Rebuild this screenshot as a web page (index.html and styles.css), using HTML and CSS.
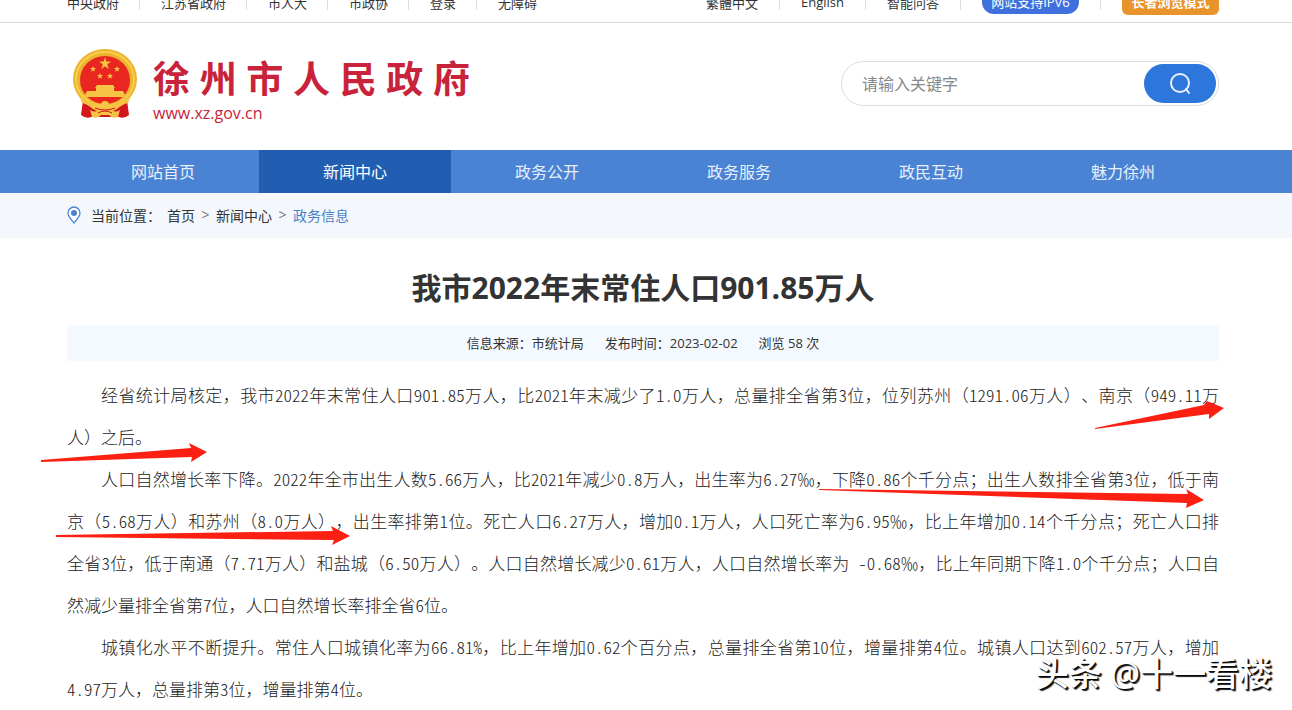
FILE: index.html
```html
<!DOCTYPE html>
<html lang="zh-CN">
<head>
    <meta charset="UTF-8">
    <meta name="viewport" content="width=device-width, initial-scale=1.0">
    <title>我市2022年末常住人口901.85万人</title>
    <link rel="stylesheet" href="styles.css">
</head>
<body>

    <div class="topbar">
        <div class="wrap topbar-inner">
            <div class="top-links top-left">
                <a href="#">中央政府</a>
                <a href="#">江苏省政府</a>
                <a href="#">市人大</a>
                <a href="#">市政协</a>
                <a href="#">登录</a>
                <a href="#">无障碍</a>
            </div>
            <div class="top-links">
                <a href="#">繁體中文</a>
                <a href="#">English</a>
                <a href="#">智能问答</a>
                <a href="#"><span class="pill">网站支持IPV6</span></a>
                <a href="#"><span class="pill pill-orange">长者浏览模式</span></a>
            </div>
        </div>
    </div>

    <header class="wrap header">
        <a class="logo" href="#">
            <svg class="emblem" viewBox="0 0 64 70" aria-hidden="true">
                <path d="M11 44 L8 66 Q13 70 18 68 L46 68 Q51 70 56 66 L53 44 Z" fill="#d3161b"/>
                <ellipse cx="32" cy="30" rx="32" ry="30" fill="#edb32f"/>
                <ellipse cx="32" cy="30" rx="29" ry="27" fill="none" stroke="#f8cf4c" stroke-width="2"/>
                <ellipse cx="32" cy="31" rx="25" ry="24" fill="#e92720"/>
                <g fill="#f6c444">
                    <path d="M32 8 L33.400 12.500 L38 12.500 L34.300 15.300 L35.700 20 L32 17.200 L28.300 20 L29.700 15.300 L26 12.500 L30.600 12.500 Z"/>
                    <path d="M20 17 l.8 2 2.200 0 -1.700 1.500 .7 2.300 -2-1.400 -2 1.400 .7-2.300 -1.700-1.500 2.200 0z"/>
                    <path d="M44 17 l.8 2 2.200 0 -1.700 1.500 .7 2.300 -2-1.400 -2 1.400 .7-2.300 -1.700-1.500 2.200 0z"/>
                    <path d="M27 24 l.8 2 2.200 0 -1.700 1.500 .7 2.300 -2-1.400 -2 1.400 .7-2.300 -1.700-1.500 2.200 0z"/>
                    <path d="M37 24 l.8 2 2.200 0 -1.700 1.500 .7 2.300 -2-1.400 -2 1.400 .7-2.300 -1.700-1.500 2.200 0z"/>
                    <path d="M24 36 H40 L42 39 H41 V42 H50 L52 46 V48 H12 V46 L14 42 H23 V39 H22 Z"/>
                    <path d="M6 46 L14 53 Q22 51 26 57 H38 Q42 51 50 53 L58 46 L55 54 Q50 55 44 60 L38 63 H26 L20 60 Q14 55 9 54 Z"/>
                    <path d="M17 61 Q22 64 25 61 Q32 57 39 61 Q42 64 47 61 L45 68 Q39 70 36 66 H28 Q25 70 19 68 Z"/>
                    <circle cx="32" cy="56" r="4"/>
                </g>
                <path d="M22 59 Q32 63 42 59 M25 64 Q32 60 39 64" fill="none" stroke="#d3161b" stroke-width="1"/>
            </svg>
            <span class="logo-text">
                <span class="logo-name">徐州市人民政府</span>
                <span class="logo-url">www.xz.gov.cn</span>
            </span>
        </a>
        <form class="search">
            <input type="text" placeholder="请输入关键字" aria-label="请输入关键字">
            <button type="button" aria-label="搜索">
                <svg width="24" height="24" viewBox="0 0 24 24" fill="none" stroke="#e8f1fd" stroke-width="2" stroke-linecap="round">
                    <circle cx="12" cy="11" r="9"/>
                    <path d="M18 17 L21 21"/>
                </svg>
            </button>
        </form>
    </header>

    <nav class="nav">
        <div class="wrap nav-inner">
            <a href="#">网站首页</a>
            <a href="#" class="active">新闻中心</a>
            <a href="#">政务公开</a>
            <a href="#">政务服务</a>
            <a href="#">政民互动</a>
            <a href="#">魅力徐州</a>
        </div>
    </nav>

    <div class="crumbs">
        <div class="wrap crumbs-inner">
            <svg class="pin" width="14" height="18" viewBox="0 0 14 18">
                <path d="M7 1 A6 6 0 0 1 13 7 C13 11 9 14 7 17 C5 14 1 11 1 7 A6 6 0 0 1 7 1 Z" fill="#fff" stroke="#4a83d3" stroke-width="1.300"/>
                <circle cx="7" cy="7" r="3" fill="#4a83d3"/>
            </svg>
            <span class="crumbs-label">当前位置：</span>
            <a href="#">首页</a>
            <i>&gt;</i>
            <a href="#">新闻中心</a>
            <i>&gt;</i>
            <a href="#" class="current">政务信息</a>
        </div>
    </div>

    <main class="wrap">
        <h1 class="title">我市2022年末常住人口901.85万人</h1>
        <div class="meta">
            <span>信息来源：市统计局</span>
            <span>发布时间：2023-02-02</span>
            <span>浏览 58 次</span>
        </div>
        <article class="content">
            <p>经省统计局核定，我市<b>2022</b>年末常住人口<b>901.85</b>万人，比<b>2021</b>年末减少了<b>1.0</b>万人，总量排全省第<b>3</b>位，位列苏州（<b>1291.06</b>万人）、南京（<b>949.11</b>万人）之后。</p>
            <p>人口自然增长率下降。<b>2022</b>年全市出生人数<b>5.66</b>万人，比<b>2021</b>年减少<b>0.8</b>万人，出生率为<b>6.27</b>‰，下降<b>0.86</b>个千分点；出生人数排全省第<b>3</b>位，低于南京（<b>5.68</b>万人）和苏州（<b>8.0</b>万人），出生率排第<b>1</b>位。死亡人口<b>6.27</b>万人，增加<b>0.1</b>万人，人口死亡率为<b>6.95</b>‰，比上年增加<b>0.14</b>个千分点；死亡人口排<span class="nowrap">全省</span><b>3</b>位，低于南通（<b>7.71</b>万人）和盐城（<b>6.50</b>万人）。人口自然增长减少<b>0.61</b>万人，人口自然增长率为<b> -0.68</b>‰，比上年同期下降<b>1.0</b>个千分点；人口自然减少量排全省第<b>7</b>位，人口自然增长率排全省<b>6</b>位。</p>
            <p>城镇化水平不断提升。常住人口城镇化率为<b>66.81%</b>，比上年增加<b>0.62</b>个百分点，总量排全省第<b>10</b>位，增量排第<b>4</b>位。城镇人口达到<b>602.57</b>万人，增加<b>4.97</b>万人，总量排第<b>3</b>位，增量排第<b>4</b>位。</p>
        </article>
    </main>

    <!-- 重点标注箭头 -->
    <svg class="arrows" viewBox="0 0 1292 710" fill="#fb2011" aria-hidden="true">
        <path d="M1095 428 L1204 405 L1207 401 L1224 408 L1209 419 L1209 414 L1095 429 Z"/>
        <path d="M41 460 L191 448 L189 443 L207 452 L191 462 L192 457 L41 462 Z"/>
        <path d="M819 489 L1188 494 L1186 489 L1204 500 L1186 508 L1187 503 L819 490 Z"/>
        <path d="M56 535 L333 531 L331 526 L350 536 L332 545 L334 540 L56 537 Z"/>
    </svg>

    <div class="watermark">头条 @十一看楼</div>

</body>
</html>
```
FILE: styles.css
```css
* {
    box-sizing: border-box;
}

body {
    margin: 0;
    height: 100vh;
    overflow: hidden;
    position: relative;
    background-color: #fff;
    color: #333;
    font-family: "Open Sans", "Noto Sans CJK SC", sans-serif;
    font-size: 14px;
}

a {
    color: inherit;
    text-decoration: none;
}

.wrap {
    padding: 0 73px 0 67px;
}

/* 顶部链接 */
.topbar {
    height: 23px;
    overflow: hidden;
    border-bottom: 1px solid #d9d9d9;
}

.topbar-inner {
    display: flex;
    justify-content: space-between;
    height: 40px;
    margin-top: -18px;
    font-size: 13px;
}

.top-links {
    display: flex;
    align-items: center;
}

.top-links a {
    display: flex;
    align-items: center;
    height: 16px;
    padding: 0 21px;
    border-right: 1px solid #ddd;
}

.top-left a {
    padding-right: 20px;
}

.top-links a:first-child {
    padding-left: 0;
}

.top-links a:last-child {
    padding-right: 0;
    border-right: 0;
}

.pill {
    width: 97px;
    line-height: 24px;
    border-radius: 12px;
    background-color: #4070dd;
    color: #fff;
    text-align: center;
    white-space: nowrap;
    flex-shrink: 0;
}

.pill-orange {
    line-height: 26px;
    border-radius: 6px;
    background-color: #e8932b;
    font-weight: bold;
}

/* 头部 */
.header {
    display: flex;
    justify-content: space-between;
    align-items: flex-start;
    height: 127px;
}

.logo {
    display: flex;
    padding: 26px 0 0 6px;
    color: #c9233c;
}

.emblem {
    width: 64px;
    height: 70px;
}

.logo-text {
    display: flex;
    flex-direction: column;
    margin-left: 16px;
    padding-top: 2px;
}

.logo-name {
    width: 317px;
    font-size: 37px;
    font-weight: bold;
    line-height: 56px;
    text-align: justify;
    text-align-last: justify;
}

.logo-url {
    font-size: 16px;
    line-height: 12px;
}

.search {
    display: flex;
    align-items: center;
    width: 378px;
    height: 45px;
    margin-top: 38px;
    padding: 0 2px 0 20px;
    border: 1px solid #ddd;
    border-radius: 23px;
}

.search input {
    flex: 1;
    min-width: 0;
    padding: 0;
    border: 0;
    outline: 0;
    background: none;
    font: inherit;
    font-size: 16px;
}

.search input::placeholder {
    color: #888;
}

.search button {
    display: flex;
    align-items: center;
    justify-content: center;
    width: 72px;
    height: 39px;
    padding: 0;
    border: 0;
    border-radius: 20px;
    background-color: #2d76dc;
    cursor: pointer;
}

/* 导航 */
.nav {
    background-color: #4a83d3;
}

.nav-inner {
    display: flex;
}

.nav-inner a {
    flex: 1;
    padding-top: 2px;
    line-height: 41px;
    color: #e6f0fc;
    font-size: 16px;
    text-align: center;
}

.nav-inner a.active {
    background-color: #215eb2;
    color: #fff;
}

.crumbs {
    background-color: #f4f8fd;
}

.crumbs-inner {
    display: flex;
    align-items: center;
    height: 45px;
    padding-bottom: 2px;
}

.crumbs-label {
    margin: 0 6px 0 10px;
}

.crumbs i {
    width: 21px;
    color: #777;
    font-style: normal;
    text-align: center;
}

.crumbs .current {
    color: #4a7fc8;
}

/* 正文 */
.title {
    margin: 0;
    padding: 28px 0 15px;
    font-size: 30px;
    line-height: 44px;
    text-align: center;
}

.meta {
    display: flex;
    justify-content: center;
    gap: 21px;
    background-color: #f3f9fe;
    font-size: 13px;
    line-height: 36px;
}

.content {
    padding-top: 13px;
    color: #222;
    font-family: "Noto Sans CJK SC", sans-serif;
    font-size: 17px;
    font-weight: 300;
    line-height: 42px;
    text-align: justify;
    text-spacing-trim: space-all;
}

.content p {
    margin: 0;
    text-indent: 2em;
}

/* 半角数字 */
.content b {
    font-weight: inherit;
    font-feature-settings: "hwid";
}

.nowrap {
    white-space: nowrap;
}

.arrows {
    position: absolute;
    top: 0;
    left: 0;
    width: 100%;
}

.watermark {
    position: absolute;
    right: 20px;
    bottom: 12px;
    color: #fff;
    font-size: 33px;
    font-weight: 500;
    line-height: 48px;
    text-shadow: 1px 1px 1px #000, 2px 2px 1px #222;
}
```
